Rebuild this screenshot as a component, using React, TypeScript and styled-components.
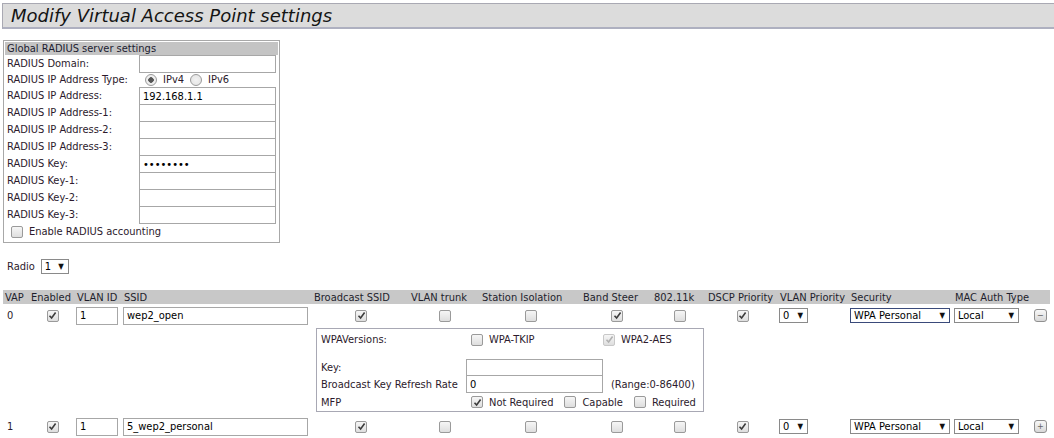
import React from "react";
import styled, { createGlobalStyle } from "styled-components";

const GlobalStyle = createGlobalStyle`
  body {
    margin: 0;
    background: #ffffff;
    font-family: "DejaVu Sans Condensed", "DejaVu Sans", Verdana, sans-serif;
    font-size: 11px;
    color: #2c1a2c;
  }
`;

const Page = styled.div`
  padding: 3px 0 0 3px;
  width: 1051px;
`;

const TitleBar = styled.div`
  height: 23px;
  margin-left: -1px;
  padding-left: 8px;
  background: #dcdcdc;
  border-top: 1px solid #a9a9b3;
  border-left: 1px solid #a9a9b3;
  border-bottom: 2px solid #aeb0c0;
  font-family: "DejaVu Sans", Verdana, sans-serif;
  font-style: italic;
  font-size: 18px;
  line-height: 24px;
  color: #141414;
`;

const RadiusBox = styled.div`
  margin-top: 11px;
  width: 273px;
  border: 1px solid #a8a8a8;
  padding: 1px 1px 2px 1px;
`;

const BoxHeader = styled.div`
  background: #c4c4c4;
  height: 13px;
  line-height: 13px;
  padding-left: 2px;
  color: #1c1c30;
`;

const FieldGrid = styled.div`
  display: grid;
  grid-template-columns: 134px 137px;
  align-items: center;
`;

const Label = styled.div<{ $h?: number }>`
  padding-left: 2px;
  height: ${(p) => p.$h ?? 17}px;
  line-height: ${(p) => p.$h ?? 17}px;
  white-space: nowrap;
`;

const TextInput = styled.input<{ $w: number }>`
  box-sizing: border-box;
  width: ${(p) => p.$w}px;
  height: 18px;
  margin: 0 0 -1px 0;
  padding: 0 3px;
  border: 1px solid #a7a7a7;
  font: inherit;
  font-size: 11px;
  color: #000;
  background: #fff;
  outline: none;
`;

const ChoiceGroup = styled.div`
  display: flex;
  align-items: center;
  height: 15px;
  padding-left: 6px;
`;

const Choice = styled.label`
  display: inline-flex;
  align-items: center;
  gap: 6px;
  margin-right: 6px;
  white-space: nowrap;
`;

const RadioDot = styled.span<{ $on?: boolean }>`
  box-sizing: border-box;
  width: 12px;
  height: 12px;
  border-radius: 50%;
  border: 1px solid #9a9a9a;
  background: radial-gradient(circle, ${(p) => (p.$on ? "#555 0 2.5px, #eee 3px" : "#f2f2f2 0, #e2e2e2 100%")});
`;

const Box = styled.span<{ $dim?: boolean }>`
  box-sizing: border-box;
  display: inline-flex;
  align-items: center;
  justify-content: center;
  width: 12px;
  height: 12px;
  border-radius: 2px;
  border: 1px solid ${(p) => (p.$dim ? "#c8c8c8" : "#9a9a9a")};
  background: linear-gradient(#f6f6f6, #dedede);
  flex: none;
`;

function Check({ on, dim }: { on?: boolean; dim?: boolean }) {
  return (
    <Box $dim={dim}>
      {on && (
        <svg width="9" height="9" viewBox="0 0 9 9">
          <path
            d="M1.5 4.8 L3.6 7 L7.6 1.6"
            fill="none"
            stroke={dim ? "#b0b0b0" : "#3c3c3c"}
            strokeWidth="1.6"
          />
        </svg>
      )}
    </Box>
  );
}

const AccountingRow = styled.div`
  display: flex;
  align-items: center;
  gap: 6px;
  height: 17px;
  padding-left: 6px;
`;

const RadioLine = styled.div`
  display: flex;
  align-items: center;
  gap: 6px;
  margin-top: 16px;
  padding-left: 4px;
`;

const Select = styled.span<{ $w: number; $focus?: boolean }>`
  box-sizing: border-box;
  display: inline-flex;
  align-items: center;
  justify-content: space-between;
  width: ${(p) => p.$w}px;
  height: 15px;
  padding: 0 4px 0 3px;
  border: 1px solid ${(p) => (p.$focus ? "#3a4a7a" : "#8a8a8a")};
  color: #000;
  background: #fff;
  white-space: nowrap;
  vertical-align: middle;
`;

const Arrow = styled.span`
  font-size: 8px;
  color: #111;
`;

const VapTable = styled.table`
  margin-top: 16px;
  border-collapse: collapse;
  width: 1047px;
  table-layout: fixed;
`;

const Th = styled.th<{ $w: number }>`
  box-sizing: border-box;
  width: ${(p) => p.$w}px;
  background: #c8c8c8;
  height: 14px;
  padding: 0 0 0 2px;
  font-weight: normal;
  text-align: left;
  white-space: nowrap;
  color: #1e1e2c;
`;

const Td = styled.td<{ $center?: boolean }>`
  padding: 0 0 0 1px;
  height: 22px;
  text-align: ${(p) => (p.$center ? "center" : "left")};
  vertical-align: middle;
  white-space: nowrap;
`;

const IdCell = styled(Td)`
  padding-left: 4px;
`;

const CenterBox = styled.span`
  display: inline-flex;
  vertical-align: middle;
`;

const RowButton = styled.span`
  box-sizing: border-box;
  display: inline-flex;
  align-items: center;
  justify-content: center;
  width: 13px;
  height: 13px;
  margin-left: 3px;
  border-radius: 3px;
  border: 1px solid #909090;
  background: linear-gradient(#f8f8f8, #d8d8d8);
  font-size: 9px;
  line-height: 1;
  color: #666;
`;

const SubCell = styled.td`
  padding: 2px 0 3px 4px;
`;

const SubBox = styled.div`
  box-sizing: border-box;
  width: 388px;
  height: 84px;
  border: 1px solid #a8a8b4;
  padding: 3px 4px 0 4px;
  display: grid;
  grid-template-columns: 145px 137px auto;
  grid-template-rows: 15px 12px 17px 17px 18px;
  align-items: center;
`;

const SubInput = styled(TextInput)`
  margin: 0;
`;

const Inline = styled.div<{ $span?: number; $pad?: number }>`
  display: flex;
  align-items: center;
  gap: 6px;
  padding-left: ${(p) => p.$pad ?? 5}px;
  white-space: nowrap;
  grid-column: span ${(p) => p.$span ?? 1};
`;

const Spacer = styled.div`
  grid-column: 1 / -1;
`;

const Range = styled.div`
  padding-left: 8px;
  white-space: nowrap;
`;

const MfpChoice = styled.span`
  display: inline-flex;
  align-items: center;
  gap: 6px;
  margin-right: 5px;
`;

const headers: [string, number][] = [
  ["VAP", 26],
  ["Enabled", 46],
  ["VLAN ID", 47],
  ["SSID", 190],
  ["Broadcast SSID", 97],
  ["VLAN trunk", 71],
  ["Station Isolation", 101],
  ["Band Steer", 71],
  ["802.11k", 54],
  ["DSCP Priority", 72],
  ["VLAN Priority", 71],
  ["Security", 104],
  ["MAC Auth Type", 77],
  ["", 20],
];

const radiusFields: [string, string][] = [
  ["RADIUS IP Address:", "192.168.1.1"],
  ["RADIUS IP Address-1:", ""],
  ["RADIUS IP Address-2:", ""],
  ["RADIUS IP Address-3:", ""],
  ["RADIUS Key:", "••••••••"],
  ["RADIUS Key-1:", ""],
  ["RADIUS Key-2:", ""],
  ["RADIUS Key-3:", ""],
];

type Vap = {
  id: string;
  ssid: string;
  flags: boolean[];
  last: string;
  focus?: boolean;
};

const vaps: Vap[] = [
  { id: "0", ssid: "wep2_open", flags: [true, false, false, true, false, true], last: "−", focus: true },
  { id: "1", ssid: "5_wep2_personal", flags: [true, false, false, false, false, true], last: "+" },
];

function VapRow({ vap }: { vap: Vap }) {
  return (
    <tr>
      <IdCell>{vap.id}</IdCell>
      <Td $center>
        <CenterBox>
          <Check on />
        </CenterBox>
      </Td>
      <Td>
        <TextInput $w={42} defaultValue="1" />
      </Td>
      <Td>
        <TextInput $w={185} defaultValue={vap.ssid} />
      </Td>
      {vap.flags.map((f, i) => (
        <Td $center key={i}>
          <CenterBox>
            <Check on={f} />
          </CenterBox>
        </Td>
      ))}
      <Td>
        <Select $w={29}>
          0 <Arrow>▼</Arrow>
        </Select>
      </Td>
      <Td>
        <Select $w={100} $focus={vap.focus}>
          WPA Personal <Arrow>▼</Arrow>
        </Select>
      </Td>
      <Td>
        <Select $w={65}>
          Local <Arrow>▼</Arrow>
        </Select>
      </Td>
      <Td>
        <RowButton>{vap.last}</RowButton>
      </Td>
    </tr>
  );
}

export default function App() {
  return (
    <>
      <GlobalStyle />
      <Page>
        <TitleBar>Modify Virtual Access Point settings</TitleBar>

        <RadiusBox>
          <BoxHeader>Global RADIUS server settings</BoxHeader>
          <FieldGrid>
            <Label>RADIUS Domain:</Label>
            <TextInput $w={137} />
            <Label $h={15}>RADIUS IP Address Type:</Label>
            <ChoiceGroup>
              <Choice>
                <RadioDot $on />
                IPv4
              </Choice>
              <Choice>
                <RadioDot />
                IPv6
              </Choice>
            </ChoiceGroup>
            {radiusFields.map(([label, value]) => (
              <React.Fragment key={label}>
                <Label>{label}</Label>
                <TextInput $w={137} defaultValue={value} />
              </React.Fragment>
            ))}
          </FieldGrid>
          <AccountingRow>
            <Check />
            Enable RADIUS accounting
          </AccountingRow>
        </RadiusBox>

        <RadioLine>
          Radio
          <Select $w={28}>
            1 <Arrow>▼</Arrow>
          </Select>
        </RadioLine>

        <VapTable>
          <thead>
            <tr>
              {headers.map(([h, w], i) => (
                <Th key={i} $w={w}>
                  {h}
                </Th>
              ))}
            </tr>
          </thead>
          <tbody>
            <VapRow vap={vaps[0]} />
            <tr>
              <td colSpan={4} />
              <SubCell colSpan={10}>
                <SubBox>
                  <div>WPAVersions:</div>
                  <Inline>
                    <Check />
                    WPA-TKIP
                  </Inline>
                  <Inline $pad={0}>
                    <Check on dim />
                    WPA2-AES
                  </Inline>
                  <Spacer />
                  <div>Key:</div>
                  <SubInput $w={137} />
                  <div />
                  <div>Broadcast Key Refresh Rate</div>
                  <SubInput $w={137} defaultValue="0" style={{ marginTop: -1 }} />
                  <Range>(Range:0-86400)</Range>
                  <div>MFP</div>
                  <Inline $span={2}>
                    <MfpChoice>
                      <Check on />
                      Not Required
                    </MfpChoice>
                    <MfpChoice>
                      <Check />
                      Capable
                    </MfpChoice>
                    <MfpChoice>
                      <Check />
                      Required
                    </MfpChoice>
                  </Inline>
                </SubBox>
              </SubCell>
            </tr>
            <VapRow vap={vaps[1]} />
          </tbody>
        </VapTable>
      </Page>
    </>
  );
}
